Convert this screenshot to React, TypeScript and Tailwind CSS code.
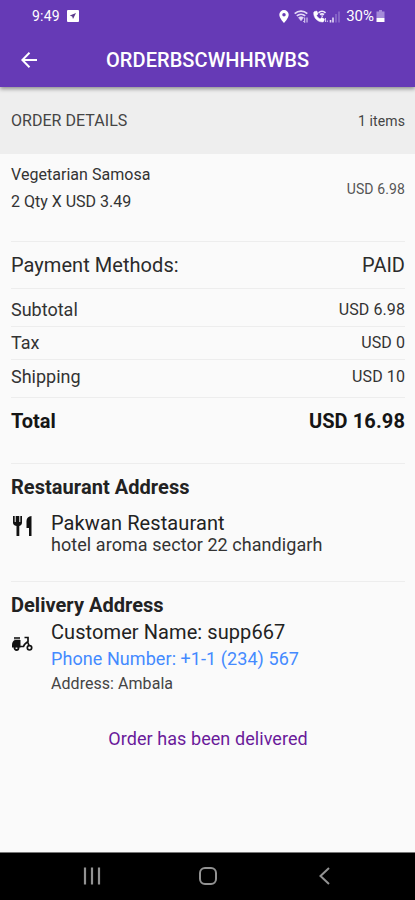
import type { ReactNode } from "react";

function StatusBar() {
  return (
    <div className="flex h-8 items-center justify-between pl-8 pr-[30px] text-white">
      <div className="flex items-center gap-[7px]">
        <span className="text-[14px] leading-none tracking-[0.2px]">9:49</span>
        <svg width="12" height="12" viewBox="0 0 12 12">
          <rect width="12" height="12" rx="1" fill="#fff" />
          <path d="M9 3 2.8 5.6l2.4.9L6 9z" fill="#5b3a8c" />
        </svg>
      </div>
      <div className="flex items-center">
        <svg width="10" height="13" viewBox="0 0 10 13" className="mr-[5px]">
          <path
            d="M5 0a4.7 4.7 0 0 0-4.7 4.7C.3 8 5 13 5 13s4.700-5 4.700-8.300A4.700 4.700 0 0 0 5 0zm0 6.500a1.700 1.700 0 1 1 0-3.500 1.700 1.700 0 0 1 0 3.500z"
            fill="#fff"
          />
        </svg>
        <svg width="15" height="13" viewBox="0 0 15 13" className="mr-[4px]" fill="none" stroke="#e4d9f7">
          <path d="M.7 3.600C4.400.4 9.600.4 13.300 3.600" strokeWidth="1.800" />
          <path d="M2.800 5.800c2.500-2.100 6-2.100 8.400 0" strokeWidth="1.700" />
          <path d="M4.500 7.600 7 10.800l2.500-3.200c-1.500-1.200-3.500-1.200-5 0z" fill="#e4d9f7" strokeWidth=".6" />
          <path d="M10.700 7.500v5M9.400 11l1.300 1.500M13 12.500v-5" strokeWidth="1" />
        </svg>
        <svg width="28" height="13" viewBox="0 0 28 13" className="mr-[5px]">
          <path
            d="M1.600 1.500 3.800 1l1.300 3-1.500 1.300c.7 1.700 1.900 2.900 3.600 3.700l1.300-1.400 2.900 1.300-.5 2.200c-.2.600-.7.900-1.300.9C4.400 11.900.6 8 .7 2.800c0-.6.300-1.100.9-1.300z"
            fill="#fff"
            stroke="#fff"
            strokeWidth=".5"
          />
          <path d="M5.500 2.800c2-1.900 5-1.900 7 0M7 4.700c1.200-1 2.800-1 4 0" fill="none" stroke="#f1eafc" strokeWidth="1.600" />
          <path d="M8 5.500h2.400L9.200 7.200z" fill="#fff" />
          <path d="M12.500 8v4M14.300 10.500V12" stroke="#d6c7f0" strokeWidth="1" />
          <path d="M17.500 10v2.500M20 7.500v5" stroke="#e4d9f7" strokeWidth="1.600" />
          <path d="M23 4v8.500M26 1.500v11" stroke="#8867c8" strokeWidth="1.800" />
        </svg>
        <span className="text-[15px] leading-none">30%</span>
        <svg width="9" height="12" viewBox="0 0 9 12" className="ml-[2px]">
          <path d="M3 0h3v1.500h2.500V8H.5V1.500H3z" fill="#a58bd9" />
          <path d="M.5 8h8v4h-8z" fill="#fff" />
        </svg>
      </div>
    </div>
  );
}

function Divider() {
  return <div className="h-px shrink-0 bg-[#ededed]" />;
}

function PriceRow({ label, value, className }: { label: string; value: string; className: string }) {
  return (
    <div className={`flex items-center justify-between text-[#333] ${className}`}>
      <span className="text-lg">{label}</span>
      <span className="text-base tracking-[0.1px]">{value}</span>
    </div>
  );
}

function AddressBlock({ icon, children }: { icon: ReactNode; children: ReactNode }) {
  return (
    <div className="flex">
      <div className="w-10 shrink-0">{icon}</div>
      <div className="flex flex-col">{children}</div>
    </div>
  );
}

export default function App() {
  return (
    <div className="flex h-[900px] w-[415px] flex-col overflow-hidden bg-[#fafafa] font-[Roboto,sans-serif] text-[#222]">
      {/* App bar */}
      <header className="relative h-[87px] shrink-0 bg-[#663ab6] shadow-[0_2px_4px_rgba(0,0,0,0.4)]">
        <StatusBar />
        <div className="flex h-[55px] items-center">
          <svg width="16" height="16" viewBox="0 0 16 16" className="ml-[21px]" fill="none" stroke="#fff" strokeWidth="2">
            <path d="M16 8H1.500M8.500 .8 1.300 8l7.200 7.200" />
          </svg>
          <h1 className="ml-[69px] pt-px text-xl font-medium tracking-[0.07px] text-white">ORDERBSCWHHRWBS</h1>
        </div>
      </header>

      <div className="flex h-[67px] shrink-0 items-center justify-between bg-[#eeeeee] pl-[11px] pr-[10px] text-[#444]">
        <h2 className="pt-px text-base tracking-[0.04px]">ORDER DETAILS</h2>
        <span className="pt-px text-sm tracking-[0.1px]">1 items</span>
      </div>

      <main className="grow pl-[11px] pr-[10px]">
        <div className="flex h-[87px] justify-between">
          <div className="pt-[7px] text-base leading-[27px] text-[#333]">
            <p className="tracking-[0.04px]">Vegetarian Samosa</p>
            <p>2 Qty X USD 3.49</p>
          </div>
          <span className="pt-[25px] text-sm tracking-[0.12px] text-[#555]">USD 6.98</span>
        </div>

        <Divider />
        <div className="flex h-[46px] items-center justify-between text-xl text-[#2b2b2b]">
          <span className="tracking-[0.05px]">Payment Methods:</span>
          <span>PAID</span>
        </div>
        <Divider />
        <PriceRow label="Subtotal" value="USD 6.98" className="h-[37px] pt-1" />
        <Divider />
        <PriceRow label="Tax" value="USD 0" className="h-8" />
        <Divider />
        <PriceRow label="Shipping" value="USD 10" className="h-[37px] pb-1" />
        <Divider />
        <div className="flex h-[65px] justify-between pt-[9px] text-xl font-bold text-[#151515]">
          <span>Total</span>
          <span className="tracking-[0.1px]">USD 16.98</span>
        </div>

        <Divider />
        <section className="h-[117px] pt-[9px]">
          <h3 className="text-xl font-bold tracking-[0.05px]">Restaurant Address</h3>
          <AddressBlock
            icon={
              <svg width="20" height="20" viewBox="0 0 20 20" className="ml-[2px] mt-[15px]" fill="#111">
                <path d="M0 0h1.700v6h1V0h3.600v6h1V0H9v6.500C9 8.500 8 9.500 6.300 10v10H3.500V10C1 9.500 0 8.500 0 6.500zM4 0h1v6H4z" />
                <path d="M18.500 0v20H16v-8h-2.500V5c0-3 2-4.700 5-5z" />
              </svg>
            }
          >
            <p className="mt-[10px] text-xl leading-6 tracking-[0.1px]">Pakwan Restaurant</p>
            <p className="text-lg leading-5 tracking-[0.06px] text-[#333]">hotel aroma sector 22 chandigarh</p>
          </AddressBlock>
        </section>

        <Divider />
        <section className="pt-[9px]">
          <h3 className="text-xl font-bold tracking-[0.03px]">Delivery Address</h3>
          <AddressBlock
            icon={
              <svg width="21" height="15" viewBox="0 0 21 15" className="ml-[1px] mt-[17px]" fill="none" stroke="#111">
                <path d="M0 9C0 6 1.500 4 3.500 4H8.500v7.500H0z" fill="#111" stroke="none" />
                <path d="M2 2.200h6" stroke="#444" strokeWidth="2.400" />
                <circle cx="4.500" cy="12" r="2" strokeWidth="1.800" />
                <circle cx="17.500" cy="11.800" r="2.200" strokeWidth="1.700" />
                <path d="M7 10.500h4.500c1-3 3.500-4 4.500-5V1.500h-3.500M15.500 5.500l1.500 4" strokeWidth="1.700" />
              </svg>
            }
          >
            <p className="text-xl leading-[27px] tracking-[0.08px]">Customer Name: supp667</p>
            <p className="text-lg leading-[26px] tracking-[0.07px] text-[#448aff]">Phone Number: +1-1 (234) 567</p>
            <p className="text-base leading-6 tracking-[0.05px] text-[#444]">Address: Ambala</p>
          </AddressBlock>
          <p className="mt-[29px] text-center text-lg tracking-[0.07px] text-[#6a1b9a]">Order has been delivered</p>
        </section>
      </main>

      {/* Android navigation */}
      <nav className="flex h-12 shrink-0 items-center border-t border-[#777] bg-black pb-px pl-[83px]">
        <svg width="18" height="18" viewBox="0 0 18 18" stroke="#929292" strokeWidth="2.200">
          <path d="M2 .5v17M9 .5v17M16 .5v17" />
        </svg>
        <svg width="18" height="18" viewBox="0 0 18 18" className="ml-[98px]" fill="none" stroke="#929292" strokeWidth="2">
          <rect x="1" y="1" width="16" height="16" rx="5" />
        </svg>
        <svg width="11" height="18" viewBox="0 0 11 18" className="ml-[102px]" fill="none" stroke="#929292" strokeWidth="2">
          <path d="M10 1 1.500 9l8.500 8" />
        </svg>
      </nav>
    </div>
  );
}
